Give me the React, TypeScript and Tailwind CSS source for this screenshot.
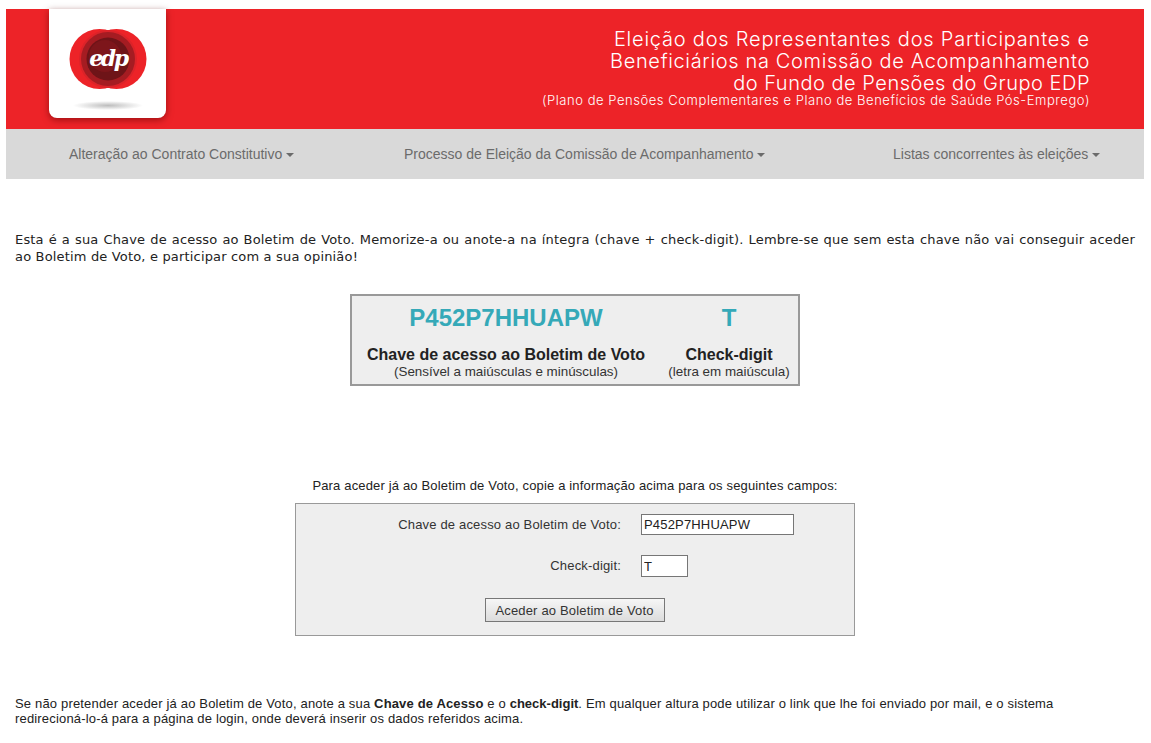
function Caret() {
  return <span className="inline-block ml-0 align-middle w-0 h-0 border-x-[4px] border-x-transparent border-t-[4px] border-t-[#6b6b6b]" />;
}

function Logo() {
  return (
    <svg width="80" height="60" viewBox="0 0 80 60">
      <circle cx="31.5" cy="30" r="30" fill="#ed2328" />
      <circle cx="48.5" cy="30" r="30" fill="#ed2328" />
      <circle cx="40" cy="30" r="29" fill="#dc2329" />
      <circle cx="40" cy="30" r="27" fill="#a51c22" />
      <circle cx="40" cy="30" r="21.5" fill="#6e1418" />
      <circle cx="37" cy="27" r="16" fill="#7d161b" />
      <text x="40" y="37" textAnchor="middle" fill="#fff" fontFamily="'DejaVu Serif', serif" fontStyle="italic" fontWeight="700" fontSize="22" letterSpacing="-2.5">edp</text>
    </svg>
  );
}

export default function App() {
  return (
    <div className="bg-white pt-[9px] pl-[6px] pr-[7px] font-['Liberation_Sans',Arial,sans-serif] text-[#222] overflow-hidden h-[743px]">
      <header className="bg-[#ed2328] h-[120px] flex justify-between">
        <div className="ml-[43px] w-[117px] h-[109px] bg-white rounded-b-[8px] shadow-[0_2px_7px_rgba(90,0,0,0.55)] flex flex-col items-center pt-[20px]">
          <Logo />
          <div className="mt-[12px] w-[70px] h-[9px] rounded-[50%] bg-[radial-gradient(closest-side,#bdbdbd,#ffffff)]" />
        </div>
        <div className="mr-[54px] pt-[19px] text-right text-white font-['Inter',sans-serif] font-light">
          <div className="text-[20px] leading-[22px] tracking-[0.78px]">Eleição dos Representantes dos Participantes e</div>
          <div className="text-[20px] leading-[22px] tracking-[0.66px]">Beneficiários na Comissão de Acompanhamento</div>
          <div className="text-[20px] leading-[22px] tracking-[0.52px]">do Fundo de Pensões do Grupo EDP</div>
          <div className="text-[13px] leading-[13px] tracking-[0.55px]">(Plano de Pensões Complementares e Plano de Benefícios de Saúde Pós-Emprego)</div>
        </div>
      </header>

      <nav className="bg-[#d9d9d9] h-[50px] flex items-center pl-[63px] text-[14px] text-[#6b6b6b]">
        <span className="w-[335px]">Alteração ao Contrato Constitutivo <Caret /></span>
        <span className="w-[489px]">Processo de Eleição da Comissão de Acompanhamento <Caret /></span>
        <span>Listas concorrentes às eleições <Caret /></span>
      </nav>

      <p className="mt-[52px] mx-[9px] font-['DejaVu_Sans',Verdana,sans-serif] text-[13px] leading-[17px] tracking-[0.17px] text-justify">
        Esta é a sua Chave de acesso ao Boletim de Voto. Memorize-a ou anote-a na íntegra (chave + check-digit). Lembre-se que sem esta chave não vai conseguir aceder ao Boletim de Voto, e participar com a sua opinião!
      </p>

      <div className="mt-[29px] ml-[344px] w-[450px] h-[92px] border-2 border-[#999] bg-[#eee] grid grid-cols-[308px_1fr] text-center">
        <div className="pt-[7px]">
          <div className="text-[24px] leading-[30px] font-bold text-[#35a9b8]">P452P7HHUAPW</div>
          <div className="mt-[13px] text-[16px] leading-[18px] font-bold">Chave de acesso ao Boletim de Voto</div>
          <div className="text-[13.4px] leading-[16px] text-[#333]">(Sensível a maiúsculas e minúsculas)</div>
        </div>
        <div className="pt-[7px]">
          <div className="text-[24px] leading-[30px] font-bold text-[#35a9b8]">T</div>
          <div className="mt-[13px] text-[16px] leading-[18px] font-bold">Check-digit</div>
          <div className="text-[13.4px] leading-[16px] text-[#333]">(letra em maiúscula)</div>
        </div>
      </div>

      <p className="mt-[92px] text-center text-[13px] leading-[15px] tracking-[0.16px]">
        Para aceder já ao Boletim de Voto, copie a informação acima para os seguintes campos:
      </p>

      <form className="mt-[10px] ml-[289px] w-[560px] h-[133px] border border-[#999] bg-[#eee] text-[13px] tracking-[0.17px] text-[#333]">
        <div className="flex items-center mt-[10px]">
          <label className="w-[325px] text-right">Chave de acesso ao Boletim de Voto:</label>
          <input readOnly value="P452P7HHUAPW" className="ml-[20px] w-[153px] h-[21px] border border-[#767676] bg-white px-[2px] text-[13px] text-[#222] outline-none" />
        </div>
        <div className="flex items-center mt-[20px]">
          <label className="w-[325px] text-right">Check-digit:</label>
          <input readOnly value="T" className="ml-[20px] w-[47px] h-[22px] border border-[#767676] bg-white px-[2px] text-[13px] text-[#222] outline-none" />
        </div>
        <div className="flex justify-center mt-[21px]">
          <button type="button" className="ml-[-1px] w-[180px] h-[24px] pt-[1px] border border-[#777] bg-gradient-to-b from-[#f6f6f6] to-[#dcdcdc] text-[13px] tracking-[0.17px] text-[#333]">Aceder ao Boletim de Voto</button>
        </div>
      </form>

      <p className="mt-[60px] mx-[9px] text-[13px] leading-[15px] tracking-[0.17px]">
        Se não pretender aceder já ao Boletim de Voto, anote a sua <b className="tracking-[0.15px]">Chave de Acesso</b> e o <b className="tracking-normal">check-digit</b>. Em qualquer altura pode utilizar o link que lhe foi enviado por mail, e o sistema<br />
        redirecioná-lo-á para a página de login, onde deverá inserir os dados referidos acima.
      </p>
    </div>
  );
}
